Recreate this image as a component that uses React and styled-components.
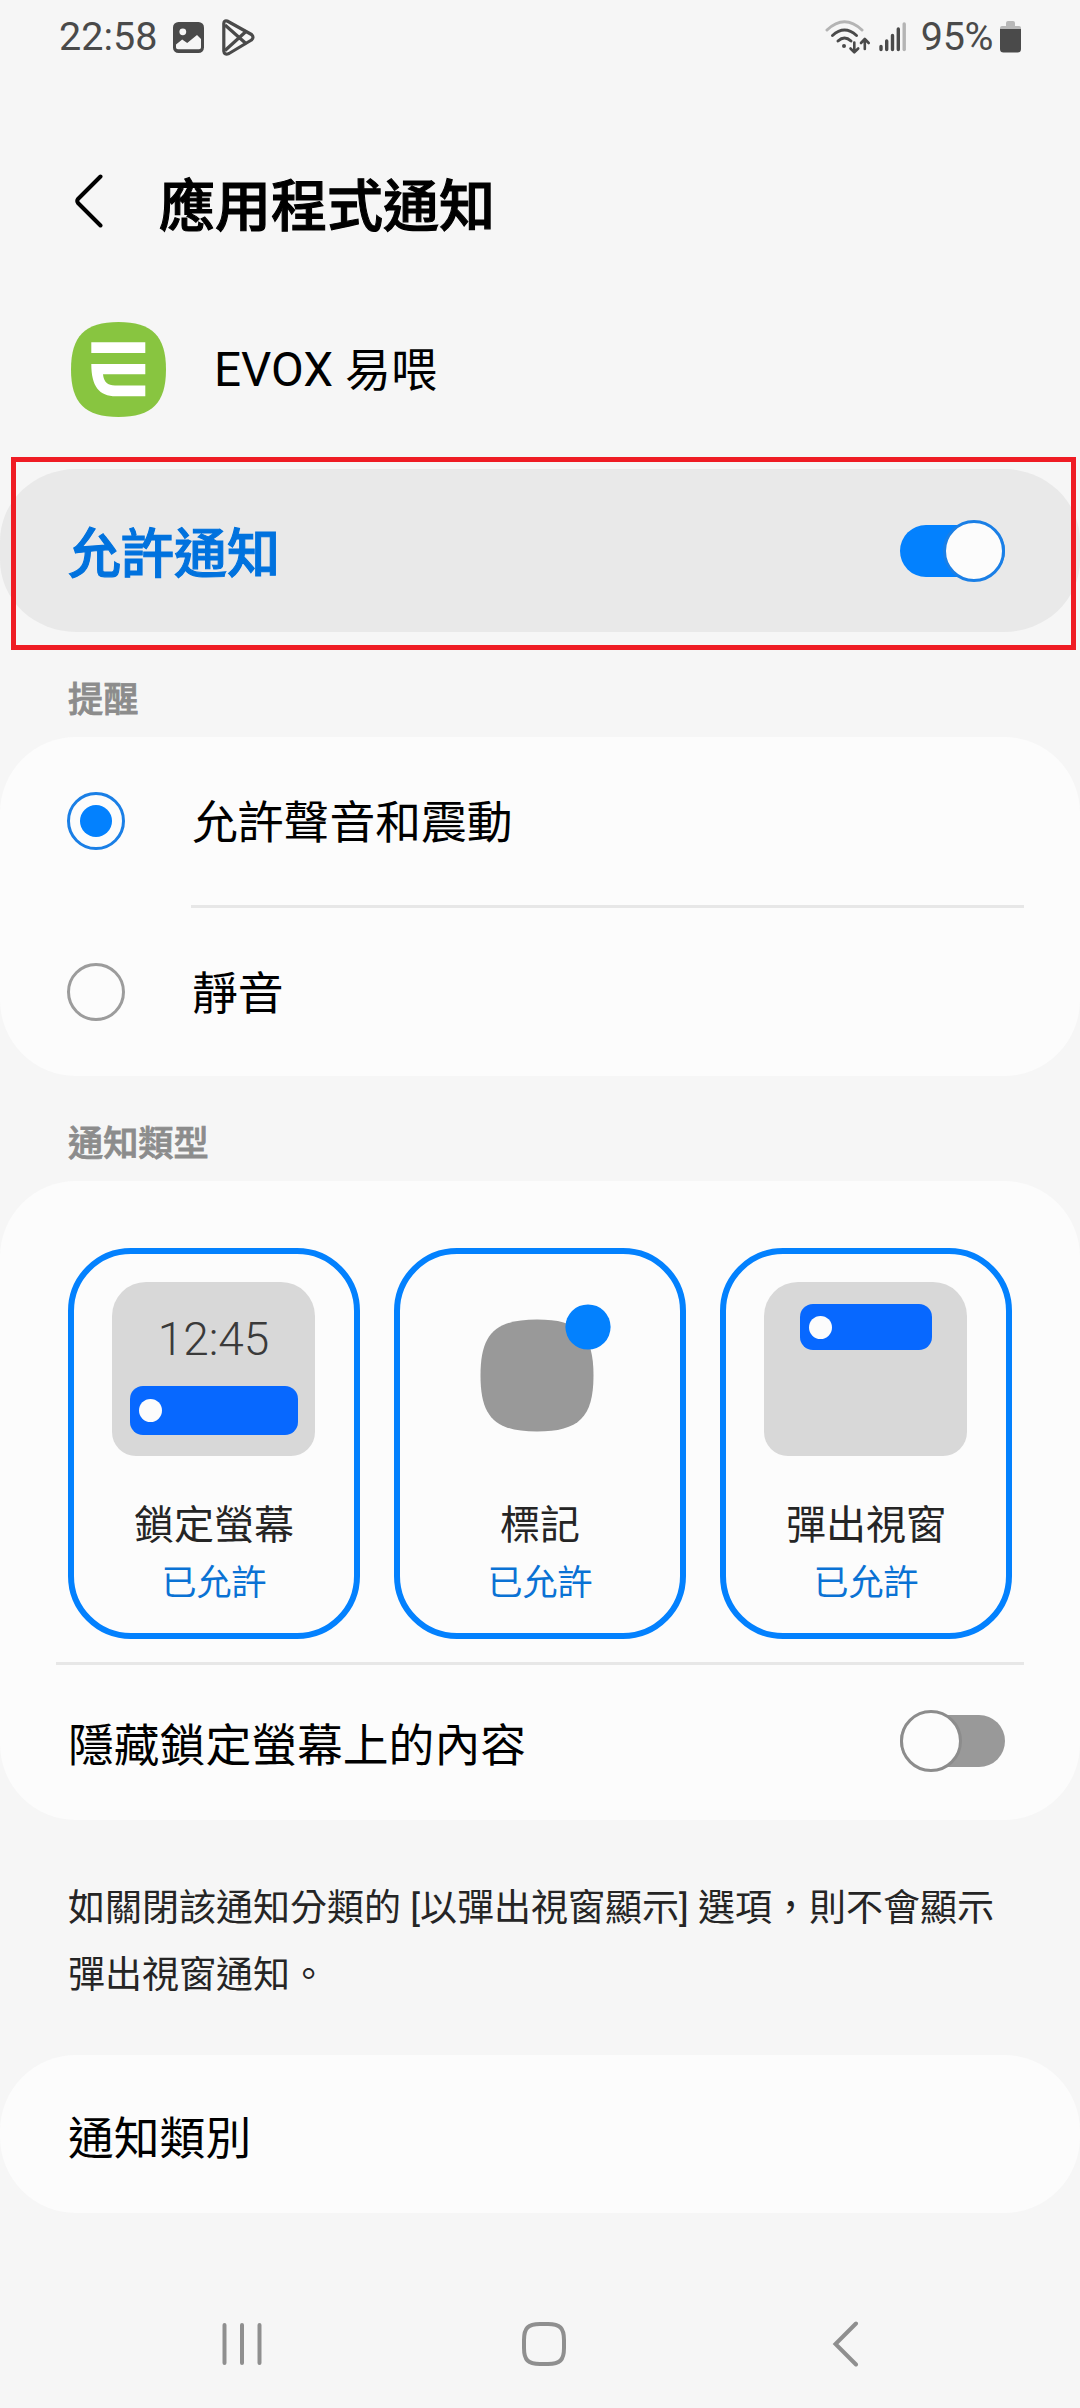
import React, { useState } from "react";
import styled, { createGlobalStyle } from "styled-components";

const GlobalStyle = createGlobalStyle`
  * { box-sizing: border-box; }
  html, body { margin: 0; padding: 0; background: #f6f6f6; }
  body { font-family: Roboto, "Noto Sans CJK TC", sans-serif; color: #000; }
`;

const Screen = styled.div`
  position: relative;
  width: 1080px;
  height: 2408px;
  display: flex;
  flex-direction: column;
  overflow: hidden;
  background: #f6f6f6;
`;

const StatusBar = styled.div`
  height: 74px;
  flex: none;
  padding: 0 59px;
  display: flex;
  align-items: center;
  justify-content: space-between;
  font-size: 39.5px;
  line-height: 48px;
  color: #4a4a4a;
`;

const StatusGroup = styled.div`
  display: flex;
  align-items: center;
`;

const StatusIcon = styled.svg`
  display: block;
  flex: none;
  margin-left: ${(p) => p.$gap || 0}px;
`;

const StatusText = styled.span`
  margin-left: ${(p) => p.$gap || 0}px;
  letter-spacing: ${(p) => p.$spacing || 0}px;
  font-weight: 400;
`;

const Header = styled.header`
  height: 96px;
  flex: none;
  margin-top: 83px;
  padding-left: 75px;
  display: flex;
  align-items: center;
`;

const BackButton = styled.button`
  width: 84px;
  height: 96px;
  padding: 0 0 8px;
  border: 0;
  background: none;
  display: flex;
  align-items: center;
`;

const Title = styled.h1`
  margin: 0;
  padding-top: 4px;
  font-size: 56px;
  line-height: 80px;
  font-weight: 500;
  -webkit-text-stroke: 1.1px currentColor;
  white-space: nowrap;
`;

const AppRow = styled.div`
  height: 95px;
  flex: none;
  margin-top: 69px;
  padding-left: 71px;
  display: flex;
  align-items: center;
  gap: 48px;
`;

const AppName = styled.span`
  font-size: 47.6px;
  line-height: 60px;
  white-space: nowrap;
`;

const Cjk = styled.span`
  font-size: 46px;
`;

const MasterRow = styled.div`
  height: 163px;
  flex: none;
  margin-top: 52px;
  padding: 0 75px 0 68px;
  border-radius: 76px / 72px;
  background: #e9e9e9;
  display: flex;
  align-items: center;
  justify-content: space-between;
`;

const MasterLabel = styled.span`
  padding-top: 8px;
  font-size: 53px;
  line-height: 72px;
  font-weight: 500;
  -webkit-text-stroke: 1.1px currentColor;
  color: #0072de;
`;

const Highlight = styled.div`
  position: absolute;
  left: 11px;
  top: 457px;
  width: 1065px;
  height: 193px;
  border: 5px solid #ef1c24;
  pointer-events: none;
`;

const Switch = styled.button`
  width: 105px;
  height: 52px;
  margin: 0 0 ${(p) => p.$lift || 0}px;
  padding: 0;
  border: 0;
  border-radius: 26px;
  display: flex;
  align-items: center;
  justify-content: ${(p) => (p.$on ? "flex-end" : "flex-start")};
  background: ${(p) => (p.$on ? "#0381fe" : "#999999")};
`;

const Knob = styled.span`
  width: 62px;
  height: 62px;
  flex: none;
  border-radius: 50%;
  border: 3px solid ${(p) => (p.$on ? "#1a7fe6" : "#8c8c8c")};
  background: #fcfcfc;
`;

const SectionLabel = styled.h2`
  height: 105px;
  flex: none;
  margin: 0;
  padding: 30px 0 0 68px;
  display: flex;
  align-items: center;
  font-size: 35.2px;
  line-height: 48px;
  font-weight: 500;
  -webkit-text-stroke: 0.8px currentColor;
  color: #8c8c8c;
`;

const Card = styled.section`
  flex: none;
  margin-top: ${(p) => p.$gap || 0}px;
  padding-top: ${(p) => p.$top || 0}px;
  border-radius: 76px;
  background: #fcfcfc;
`;

const Row = styled.div`
  height: ${(p) => p.$height}px;
  padding: 0 75px 0 68px;
  display: flex;
  align-items: center;
  justify-content: ${(p) => (p.$spread ? "space-between" : "flex-start")};
`;

const RowText = styled.span`
  padding-top: ${(p) => p.$drop}px;
  font-size: 45.8px;
  line-height: 60px;
  white-space: nowrap;
`;

const Radio = styled.span`
  width: 58px;
  height: 58px;
  flex: none;
  margin: 0 67px 0 -1px;
  border: 3px solid ${(p) => (p.$checked ? "#1a7fe6" : "#9c9c9c")};
  border-radius: 50%;
  display: flex;
  align-items: center;
  justify-content: center;
`;

const RadioDot = styled.span`
  width: 32px;
  height: 32px;
  border-radius: 50%;
  background: #0381fe;
`;

const Divider = styled.div`
  height: 3px;
  margin: ${(p) => p.$top || 0}px 56px 0 ${(p) => p.$left}px;
  background: #e7e7e7;
`;

const Tiles = styled.div`
  display: grid;
  grid-template-columns: repeat(3, 292px);
  gap: 34px;
  padding-left: 68px;
`;

const TileBox = styled.div`
  height: 391px;
  border: 6px solid #0381fe;
  border-radius: 63px;
  padding-top: 28px;
  display: flex;
  flex-direction: column;
  align-items: center;
`;

const PreviewArea = styled.div`
  width: 203px;
  height: 174px;
  flex: none;
  margin-right: 1px;
  display: flex;
  flex-direction: column;
  align-items: center;
  padding-top: ${(p) => p.$top || 0}px;
  border-radius: 34px 34px 24px 24px;
  background: ${(p) => (p.$plain ? "none" : "#d8d8d8")};
`;

const Clock = styled.span`
  height: 74px;
  font-size: 46px;
  line-height: 54px;
  font-weight: 300;
  color: #3a3a3a;
`;

const Banner = styled.span`
  width: ${(p) => p.$width}px;
  height: ${(p) => p.$height}px;
  padding-left: 9px;
  border-radius: 13px;
  background: #0768ff;
  display: flex;
  align-items: center;
`;

const BannerDot = styled.span`
  width: 23px;
  height: 23px;
  border-radius: 50%;
  background: #fcfcfc;
`;

const TileName = styled.span`
  margin-top: 45px;
  font-size: 40px;
  line-height: 50px;
  color: #252525;
`;

const TileState = styled.span`
  margin-top: 11px;
  font-size: 35px;
  line-height: 44px;
  color: #0a72d4;
`;

const Note = styled.p`
  flex: none;
  margin: 55px 0 0;
  padding: 0 68px;
  font-size: 37px;
  line-height: 67px;
  color: #252525;
`;

const NavBar = styled.nav`
  height: 128px;
  margin-top: auto;
  padding-left: 8px;
  display: grid;
  grid-template-columns: repeat(3, 302px);
  justify-content: center;
  align-items: center;
  justify-items: center;
`;

const NavIcon = styled.svg`
  display: block;
  fill: none;
  stroke: #8f8f8f;
  stroke-width: 4;
  stroke-linecap: round;
`;

function Toggle({ initial, lift }) {
  const [on, setOn] = useState(initial);
  return (
    <Switch type="button" role="switch" aria-checked={on} $on={on} $lift={lift} onClick={() => setOn(!on)}>
      <Knob $on={on} />
    </Switch>
  );
}

function GalleryIcon() {
  return (
    <StatusIcon $gap={16} width="31" height="31" viewBox="0 0 31 31">
      <rect width="31" height="31" rx="5.5" fill="#4a4a4a" />
      <circle cx="9.8" cy="9.8" r="3.4" fill="#f6f6f6" />
      <path d="M3 22.5L9.2 17.4L14.2 21L24 13L28 17V25.5Q28 27.3 26 27.3H5Q3 27.3 3 25.5Z" fill="#f6f6f6" />
    </StatusIcon>
  );
}

function PlayIcon() {
  return (
    <StatusIcon $gap={18} width="33" height="37" viewBox="0 0 33 37" fill="none" stroke="#4a4a4a" strokeWidth="3.2" strokeLinejoin="round">
      <path d="M1.8 4.5Q1.8 1.2 5.2 2L29.5 15.5Q32.5 18.3 29.5 21L7 34.500Q2.2 36.5 1.8 32Z" />
      <path d="M3 6L24.5 25M3 31.5L24.5 12" />
    </StatusIcon>
  );
}

function WifiIcon() {
  return (
    <StatusIcon width="46" height="35" viewBox="0 0 46 35" fill="none" stroke="#4a4a4a" strokeWidth="3" strokeLinecap="round" strokeLinejoin="round">
      <path d="M2 10Q19.5 -6.5 37 10" stroke="#b4b4b4" />
      <path d="M7.5 15.5Q19.5 4.5 31.5 15.5" />
      <path d="M13 21Q19.5 15 26 21" />
      <circle cx="19" cy="26" r="2" fill="#4a4a4a" stroke="none" />
      <path d="M29.3 22.5V32M25.5 28.5L29.3 32.3L33.2 28.5" strokeWidth="2.6" />
      <path d="M39.8 29V19.5M36 23L39.8 19L43.7 23" strokeWidth="2.6" />
    </StatusIcon>
  );
}

function SignalIcon() {
  return (
    <StatusIcon $gap={8} width="28" height="30" viewBox="0 0 28 30" strokeWidth="3.4" strokeLinecap="round" stroke="#4a4a4a">
      <path d="M2 24.500V27.500M7.700 19V27.500M13.500 13.500V27.500M19.300 7V27.500" />
      <path d="M25.200 2V27.500" stroke="#b4b4b4" />
    </StatusIcon>
  );
}

function BatteryIcon() {
  return (
    <StatusIcon $gap={7} width="21" height="32" viewBox="0 0 21 32">
      <path d="M0 9V7Q0 5 2 5H6V2Q6 0 8 0H13Q15 0 15 2V5H19Q21 5 21 7V9Z" fill="#b8b8b8" />
      <path d="M0 8H21V28Q21 31.500 17.500 31.500H3.500Q0 31.500 0 28Z" fill="#4a4a4a" />
    </StatusIcon>
  );
}

function AppLogo() {
  return (
    <svg width="95" height="95" viewBox="0 0 95 95">
      <path
        d="M47.500 0C81 0 95 14 95 47.500S81 95 47.500 95S0 81 0 47.500S14 0 47.500 0Z"
        fill="#88c540"
      />
      <g fill="#fff">
        <path d="M20.300 20.300H74.300V31H20.300Z" />
        <path d="M20.300 42H74.300V52.300H32Q33 63.600 44 63.600H74.300V74.300H45C28 74.300 20.300 64 20.300 42Z" />
      </g>
    </svg>
  );
}

function BadgeDrawing() {
  return (
    <svg width="203" height="174" viewBox="0 0 203 174">
      <path
        d="M99 37.500C141 37.500 155.500 52 155.500 93.500S141 149.500 99 149.500S42.500 135 42.500 93.500S57 37.500 99 37.500Z"
        fill="#999"
      />
      <circle cx="150" cy="45" r="22.600" fill="#0381fe" />
    </svg>
  );
}

function Tile({ name, children }) {
  return (
    <TileBox>
      {children}
      <TileName>{name}</TileName>
      <TileState>已允許</TileState>
    </TileBox>
  );
}

export default function App() {
  return (
    <Screen lang="zh-Hant">
      <GlobalStyle />
      <StatusBar>
        <StatusGroup>
          <StatusText>22:58</StatusText>
          <GalleryIcon />
          <PlayIcon />
        </StatusGroup>
        <StatusGroup>
          <WifiIcon />
          <SignalIcon />
          <StatusText $gap={14} $spacing={-0.4}>95%</StatusText>
          <BatteryIcon />
        </StatusGroup>
      </StatusBar>

      <Header>
        <BackButton type="button" aria-label="返回">
          <svg width="28" height="54" viewBox="0 0 28 54" fill="none" stroke="#000" strokeWidth="4" strokeLinecap="round" strokeLinejoin="round">
            <path d="M25.500 2.500L3 25Q1.500 27 3 29L25.500 51.500" />
          </svg>
        </BackButton>
        <Title>應用程式通知</Title>
      </Header>

      <AppRow>
        <AppLogo />
        <AppName>
          EVOX <Cjk>易喂</Cjk>
        </AppName>
      </AppRow>

      <MasterRow>
        <MasterLabel>允許通知</MasterLabel>
        <Toggle initial={true} />
      </MasterRow>
      <Highlight />

      <SectionLabel>提醒</SectionLabel>
      <Card>
        <Row $height={168}>
          <Radio $checked>
            <RadioDot />
          </Radio>
          <RowText $drop={6}>允許聲音和震動</RowText>
        </Row>
        <Divider $left={191} />
        <Row $height={168}>
          <Radio />
          <RowText $drop={6}>靜音</RowText>
        </Row>
      </Card>

      <SectionLabel>通知類型</SectionLabel>
      <Card $top={67}>
        <Tiles>
          <Tile name="鎖定螢幕">
            <PreviewArea $top={30}>
              <Clock>12:45</Clock>
              <Banner $width={168} $height={49}>
                <BannerDot />
              </Banner>
            </PreviewArea>
          </Tile>
          <Tile name="標記">
            <PreviewArea $plain>
              <BadgeDrawing />
            </PreviewArea>
          </Tile>
          <Tile name="彈出視窗">
            <PreviewArea $top={22}>
              <Banner $width={132} $height={46}>
                <BannerDot />
              </Banner>
            </PreviewArea>
          </Tile>
        </Tiles>
        <Divider $left={56} $top={23} />
        <Row $height={155} $spread>
          <RowText $drop={9}>隱藏鎖定螢幕上的內容</RowText>
          <Toggle initial={false} lift={3} />
        </Row>
      </Card>

      <Note>如關閉該通知分類的 [以彈出視窗顯示] 選項，則不會顯示彈出視窗通知。</Note>

      <Card $gap={46}>
        <Row $height={158}>
          <RowText $drop={12}>通知類別</RowText>
        </Row>
      </Card>

      <NavBar>
        <NavIcon width="44" height="46" viewBox="0 0 44 46">
          <path d="M4.500 4V42M22 4V42M39.500 4V42" />
        </NavIcon>
        <NavIcon width="46" height="46" viewBox="0 0 46 46">
          <path d="M23 3H27C39 3 43 7 43 19V27C43 39 39 43 27 43H19C7 43 3 39 3 27V19C3 7 7 3 19 3Z" />
        </NavIcon>
        <NavIcon width="28" height="46" viewBox="0 0 28 46">
          <path d="M24 2.500L3.500 23L24 43.500" />
        </NavIcon>
      </NavBar>
    </Screen>
  );
}
